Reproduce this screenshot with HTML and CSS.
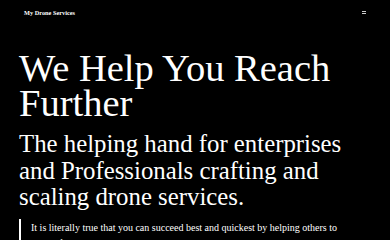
FILE: index.html
```html
<!DOCTYPE html>
<html lang="en">
<head>
    <meta charset="UTF-8">
    <meta name="viewport" content="width=device-width, initial-scale=1.0">
    <title>My Drone Services</title>
    <link rel="stylesheet" href="styles.css">
</head>
<body>
    <header class="nav">
        <a class="brand" href="#">My Drone Services</a>
        <button class="menu" aria-label="Menu">
            <span></span>
            <span></span>
        </button>
    </header>

    <main class="hero">
        <h1>We Help You Reach Further</h1>
        <h2>The helping hand for enterprises and Professionals crafting and scaling drone services.</h2>
        <blockquote class="quote">
            It is literally true that you can succeed best and quickest by helping others to succeed.
        </blockquote>
    </main>
</body>
</html>
```

FILE: styles.css
```css
body {
    margin: 0;
    background: #000;
    color: #fff;
    font-family: "Liberation Serif", serif;
}

.nav {
    display: flex;
    justify-content: space-between;
    align-items: center;
    padding: 6px 24px 0 24px;
    height: 13px;
}

.brand {
    color: #fff;
    text-decoration: none;
    font-size: 6.3px;
    font-weight: bold;
}

.menu {
    background: none;
    border: none;
    padding: 0;
    width: 4px;
    display: flex;
    flex-direction: column;
    gap: 1px;
    cursor: pointer;
}

.menu span {
    display: block;
    height: 1px;
    width: 4px;
    background: #ccc;
}

.hero {
    padding: 32px 19px 0 19px;
}

.hero h1 {
    margin: 0;
    font-size: 38.5px;
    font-weight: normal;
    line-height: 35px;
}

.hero h2 {
    margin: 10px 0 0 0;
    font-size: 24.8px;
    font-weight: normal;
    line-height: 26.5px;
}

.quote {
    margin: 8px 0 0 0;
    padding: 1px 0 0 10px;
    border-left: 2px solid #fff;
    font-size: 10px;
    line-height: 15px;
}
```
